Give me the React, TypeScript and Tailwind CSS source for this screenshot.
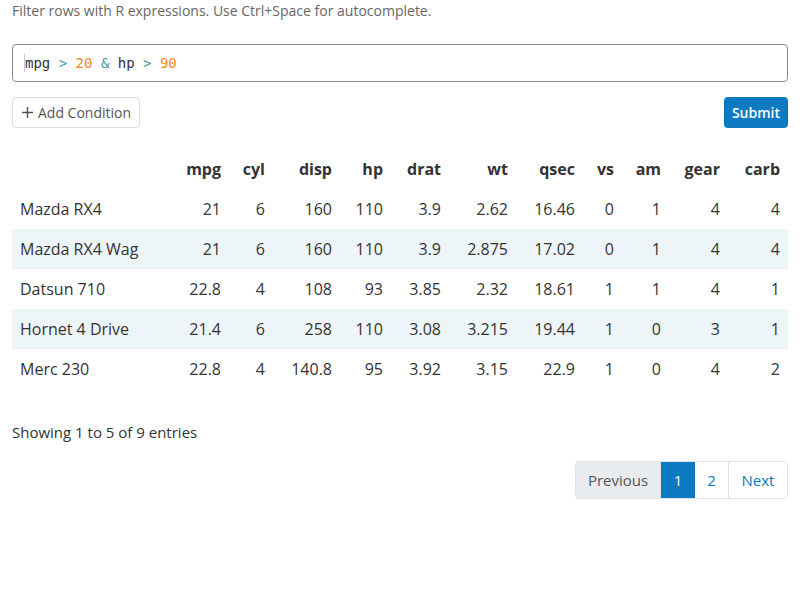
import React from "react";

const cols = [
  { k: "mpg", w: 58 },
  { k: "cyl", w: 44 },
  { k: "disp", w: 67 },
  { k: "hp", w: 51 },
  { k: "drat", w: 58 },
  { k: "wt", w: 67 },
  { k: "qsec", w: 67 },
  { k: "vs", w: 39 },
  { k: "am", w: 47 },
  { k: "gear", w: 59 },
  { k: "carb", w: 60 },
];

const rows: [string, ...string[]][] = [
  ["Mazda RX4", "21", "6", "160", "110", "3.9", "2.62", "16.46", "0", "1", "4", "4"],
  ["Mazda RX4 Wag", "21", "6", "160", "110", "3.9", "2.875", "17.02", "0", "1", "4", "4"],
  ["Datsun 710", "22.8", "4", "108", "93", "3.85", "2.32", "18.61", "1", "1", "4", "1"],
  ["Hornet 4 Drive", "21.4", "6", "258", "110", "3.08", "3.215", "19.44", "1", "0", "3", "1"],
  ["Merc 230", "22.8", "4", "140.8", "95", "3.92", "3.15", "22.9", "1", "0", "4", "2"],
];

export default function App() {
  return (
    <div className="w-[800px] h-[600px] bg-white px-3 text-[#333]" style={{ fontFamily: '"Open Sans", sans-serif' }}>
      <div className="pt-[1px] text-[14px] leading-[20px] text-[#666]">
        Filter rows with R expressions. Use Ctrl+Space for autocomplete.
      </div>
      <div className="mt-[23px] h-[38px] border border-[#8a8a8a] rounded-[4px] flex items-center pl-[11px]">
        <div className="w-px h-[18px] bg-[#ccc]" />
        <span
          className="text-[14px] leading-[20px] whitespace-pre"
          style={{ fontFamily: '"DejaVu Sans Mono", monospace' }}
        >
          <span className="text-[#333]">mpg </span>
          <span className="text-[#3e999f]">&gt;</span>
          <span> </span>
          <span className="text-[#f5871f]">20</span>
          <span> </span>
          <span className="text-[#3e999f]">&amp;</span>
          <span className="text-[#333]"> hp </span>
          <span className="text-[#3e999f]">&gt;</span>
          <span> </span>
          <span className="text-[#f5871f]">90</span>
        </span>
      </div>
      <div className="mt-[15px] flex justify-between items-center">
        <button className="h-[31px] px-[8px] flex items-center gap-[4px] border border-[#dcdcdc] rounded-[4px] bg-white text-[14px] text-[#555]">
          <svg width="13" height="13" viewBox="0 0 13 13" className="text-[#555]">
            <path d="M6.5 1v11M1 6.5h11" stroke="currentColor" strokeWidth="1.4" />
          </svg>
          Add Condition
        </button>
        <button className="h-[31px] px-[8px] rounded-[4px] bg-[#0b7ac2] text-white text-[14px] font-semibold">
          Submit
        </button>
      </div>
      <table className="mt-[21px] w-full border-collapse text-[16px] table-fixed">
        <colgroup>
          <col />
          {cols.map((c) => (
            <col key={c.k} style={{ width: c.w }} />
          ))}
        </colgroup>
        <thead>
          <tr className="h-[40px]">
            <th className="px-2"></th>
            {cols.map((c) => (
              <th key={c.k} className="px-2 text-right font-bold">
                {c.k}
              </th>
            ))}
          </tr>
        </thead>
        <tbody>
          {rows.map((r, i) => (
            <tr key={i} className={`h-[40px] ${i % 2 === 1 ? "bg-[#eef5f9]" : ""}`}>
              <td className="px-2 text-left">{r[0]}</td>
              {r.slice(1).map((v, j) => (
                <td key={j} className="px-2 text-right">
                  {v}
                </td>
              ))}
            </tr>
          ))}
        </tbody>
      </table>
      <div className="mt-[33px] text-[15px] leading-[20px] text-[#333]">Showing 1 to 5 of 9 entries</div>
      <div className="mt-[19px] flex justify-end">
        <div className="flex h-[38px] text-[15px] rounded-[4px] border border-[#dee2e6] overflow-hidden">
          <div className="w-[85px] flex items-center justify-center bg-[#e9ecef] text-[#555] border-r border-[#dee2e6]">Previous</div>
          <div className="w-[34px] flex items-center justify-center bg-[#0b7ac2] text-white">1</div>
          <div className="w-[34px] flex items-center justify-center text-[#0b7ac2] border-r border-[#dee2e6]">2</div>
          <div className="w-[58px] flex items-center justify-center text-[#0b7ac2]">Next</div>
        </div>
      </div>
    </div>
  );
}
